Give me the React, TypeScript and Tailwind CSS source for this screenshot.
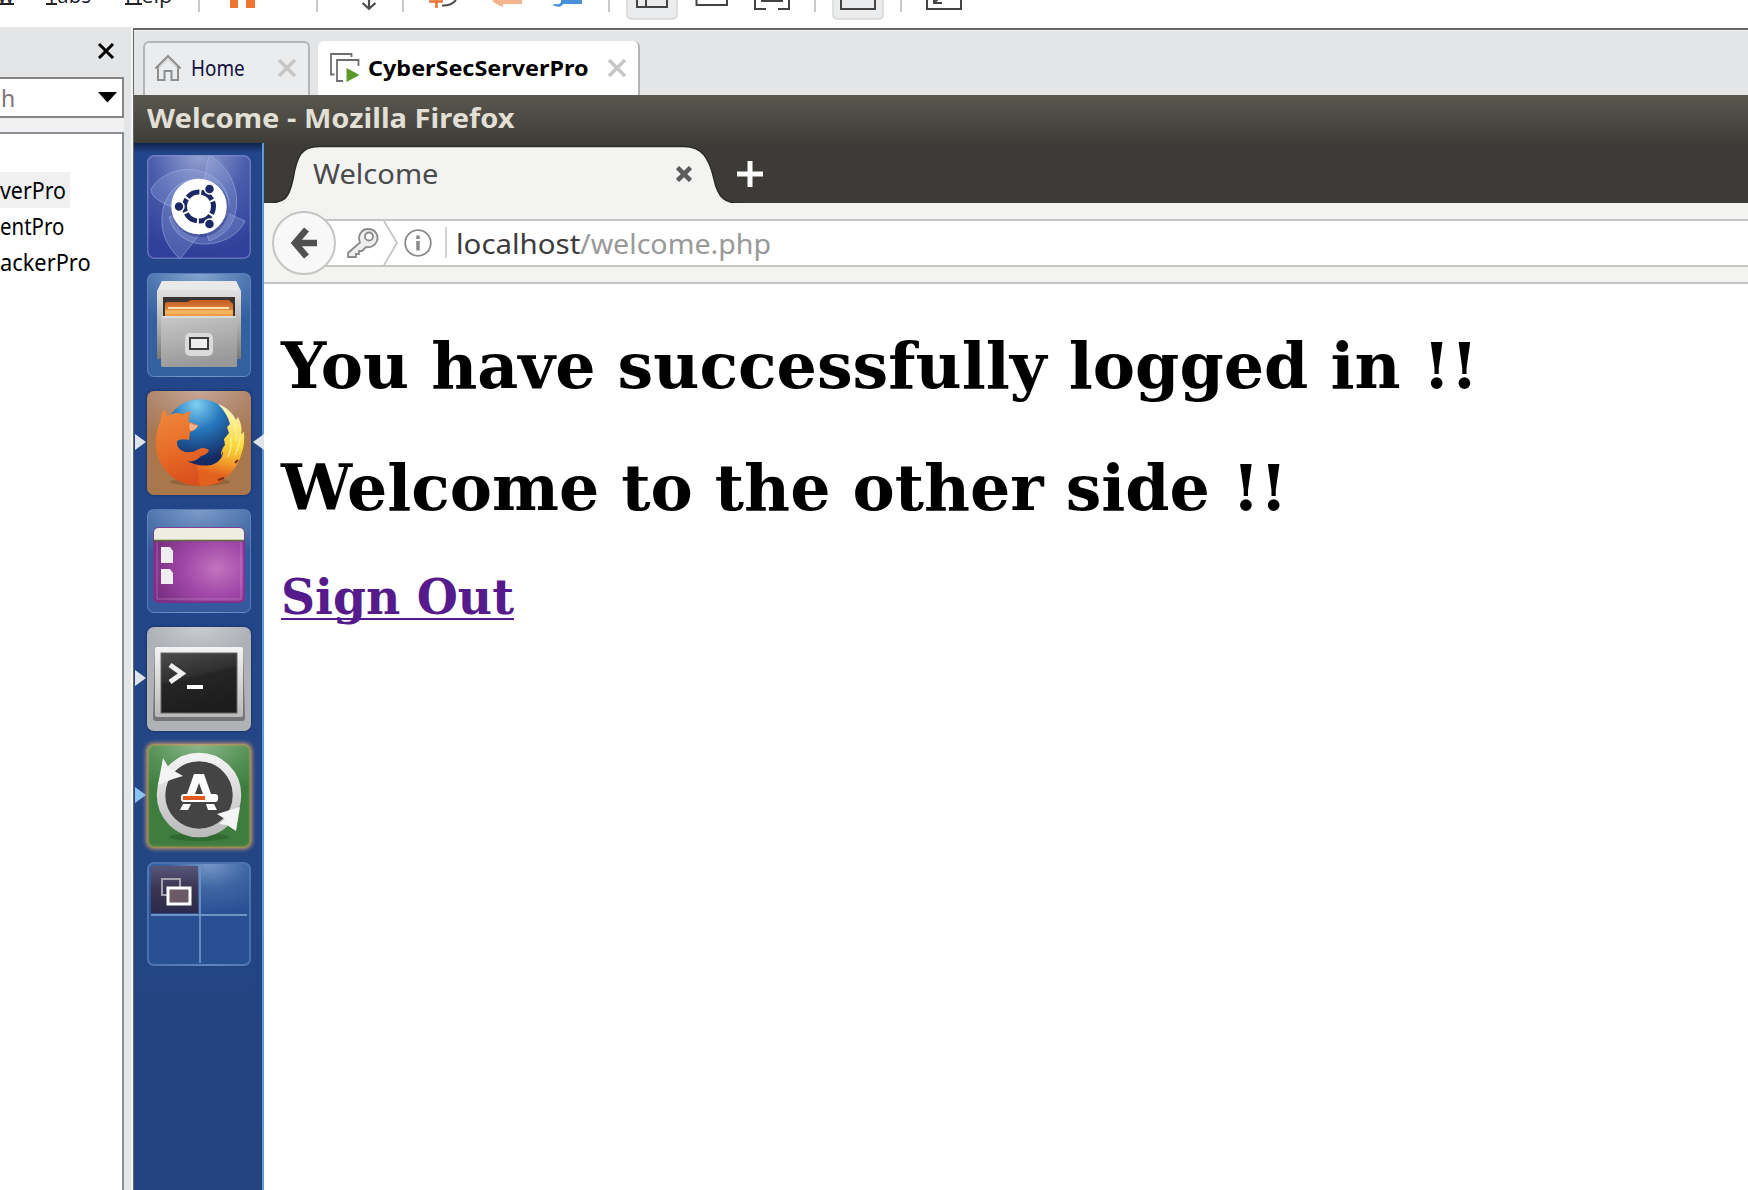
import { useLayoutEffect, useRef, useState, type ReactNode } from "react";

/* Text stretched horizontally to an exact width, whichever font is in use. */
function Fit({ width, className = "", children }: { width: number; className?: string; children: ReactNode }) {
  const ref = useRef<HTMLSpanElement>(null);
  const [scale, setScale] = useState(1);
  useLayoutEffect(() => {
    if (ref.current && ref.current.offsetWidth) setScale(width / ref.current.offsetWidth);
  }, [width]);
  return (
    <span
      ref={ref}
      className={"inline-block origin-left whitespace-nowrap " + className}
      style={{ transform: `scaleX(${scale})` }}
    >
      {children}
    </span>
  );
}

const Sep = ({ className }: { className: string }) => (
  <div className={"h-[12px] w-[2px] shrink-0 bg-[#c9c9c9] " + className} />
);

function Toolbar() {
  return (
    <div className="flex h-[27px] items-start overflow-hidden bg-white font-['Open_Sans',sans-serif] text-[21px] text-[#20202c]">
      <div className="relative h-[12px] w-[14px]">
        <span className="absolute right-0 bottom-[5px] leading-[24px]">w</span>
        <div className="absolute top-[3px] left-0 h-[2px] w-[14px] bg-[#222]" />
      </div>
      <div className="relative ml-[32px] h-[12px] w-[45px]">
        <span className="absolute bottom-[5px] left-0 leading-[24px]"><Fit width={45}>Tabs</Fit></span>
        <div className="absolute top-[3px] left-0 h-[2px] w-[11px] bg-[#222]" />
      </div>
      <div className="relative ml-[34px] h-[12px] w-[47px]">
        <span className="absolute bottom-[5px] left-0 leading-[24px]"><Fit width={47}>Help</Fit></span>
        <div className="absolute top-[3px] left-0 h-[2px] w-[17px] bg-[#222]" />
      </div>
      <Sep className="ml-[26px]" />
      <div className="ml-[30px] h-[8px] w-[8px] bg-[#ee7532]" />
      <div className="ml-[8px] h-[8px] w-[9px] bg-[#ee7532]" />
      <Sep className="ml-[61px]" />
      <svg className="ml-[43px]" width="16" height="12" fill="none" stroke="#4c4c4c" strokeWidth="2.2">
        <path d="M8 0V8M1.500 3 8 8.800 14.500 3" />
      </svg>
      <Sep className="ml-[25px]" />
      <svg className="ml-[25px]" width="32" height="12" fill="none">
        <path d="M0 1.500H14M7.500 0V8" stroke="#ee7532" strokeWidth="2.600" />
        <path d="M13 5.500Q22 6 27 0" stroke="#4c4c4c" strokeWidth="2" />
      </svg>
      <svg className="ml-[31px]" width="32" height="12">
        <path d="M0 1 2 0H30V4H11V7Q5 5 0 1Z" fill="#f6b48e" />
      </svg>
      <svg className="ml-[28px]" width="32" height="12">
        <path d="M3 4Q10 5 9 0H30V4H11Q9 9 0 5Z" fill="#4a90d9" />
      </svg>
      <Sep className="ml-[24px]" />
      <svg className="ml-[16px]" width="52" height="22" fill="none">
        <path d="M1 -5V14Q1 19 6 19H46Q51 19 51 14V-5" fill="#ebeced" stroke="#d6d7d8" strokeWidth="1.500" />
        <path d="M11 -5V7H41V-5M20 -5V7" stroke="#444" strokeWidth="2" />
      </svg>
      <svg className="ml-[17px]" width="34" height="12" fill="none" stroke="#444" strokeWidth="2">
        <path d="M1.500 -4V5H32V-4" />
      </svg>
      <svg className="ml-[24px]" width="38" height="12" fill="none" stroke="#444" strokeWidth="2">
        <path d="M2 -4V9H13M25 9H36V-4" />
        <path d="M9 -4V1H29V-4" fill="#bbb" />
      </svg>
      <Sep className="ml-[23px]" />
      <svg className="ml-[16px]" width="52" height="22" fill="none">
        <path d="M1 -5V14Q1 19 6 19H46Q51 19 51 14V-5" fill="#ebeced" stroke="#d6d7d8" strokeWidth="1.500" />
        <path d="M9 -5V9H43V-5" stroke="#444" strokeWidth="2" />
      </svg>
      <Sep className="ml-[16px]" />
      <svg className="ml-[23px]" width="38" height="12" fill="none" stroke="#444" strokeWidth="2">
        <path d="M2 -4V9H36V-4" />
        <path d="M9 -4V3H17M9 3 14 -2" />
      </svg>
    </div>
  );
}

const machines = [
  { name: "verPro", width: 66, selected: true },
  { name: "entPro", width: 64, selected: false },
  { name: "ackerPro", width: 91, selected: false },
];

function Library() {
  return (
    <aside className="flex w-[133px] shrink-0 flex-col border-r-2 border-[#f4f5f5] bg-[#e4e5e7] font-['Noto_Sans',sans-serif]">
      <div className="flex h-[50px] items-center justify-end pr-[16px]">
        <svg width="18" height="16" className="mt-[-2px]" fill="none" stroke="#000" strokeWidth="3">
          <path d="M2 1 16 15M16 1 2 15" />
        </svg>
      </div>
      <div className="w-[124px] bg-[#f0f0f0] pb-[14px]">
        <div className="flex h-[41px] w-[124px] items-center justify-between border-2 border-l-0 border-[#858585] bg-white pr-[5px] pl-[1px] text-[23px] text-[#7d7278]">
          <span className="leading-[30px]">h</span>
          <svg width="19" height="11"><path d="M0 0H19L9.500 10.500Z" fill="#000" /></svg>
        </div>
      </div>
      <div className="w-[124px] flex-1 border-t-2 border-r-2 border-[#8a8d93] bg-white pt-[38px] text-[23px] leading-[36px] text-black">
        {machines.map((m) => (
          <div key={m.name} className={m.selected ? "h-[36px] w-[70px] bg-[#f0f0f0]" : "h-[36px]"}>
            <Fit width={m.width}>{m.name}</Fit>
          </div>
        ))}
      </div>
    </aside>
  );
}

const GrayX = ({ className }: { className: string }) => (
  <svg width="20" height="20" className={className} fill="none" stroke="#c6c6c6" strokeWidth="3.600">
    <path d="M2 2 18 18M18 2 2 18" />
  </svg>
);

function VmTabs() {
  return (
    <div className="flex h-[65px] items-end border-t border-[#f6f6f6] bg-[#e4e5e7] pl-[9px] font-['Noto_Sans',sans-serif] text-[22px]">
      <div className="flex h-[54px] w-[167px] items-center rounded-t-[6px] border-2 border-b-0 border-[#b4b5b7] bg-[#ebecee] pb-[3px] pl-[9px]">
        <svg width="28" height="28" viewBox="0 0 28 28" fill="none" stroke="#8d8d8d" strokeWidth="2">
          <path d="M1.500 14.500 14 2 26.500 14.500M4 12.500V26H10.500V17H17.500V26H24V12.500" />
          <path d="M4 15 14 5 24 15" stroke="#c9c9c9" strokeWidth="1" />
        </svg>
        <span className="ml-[9px] w-[54px] text-[#10103c]"><Fit width={54}>Home</Fit></span>
        <GrayX className="ml-[32px]" />
      </div>
      <div className="ml-[8px] flex h-[54px] w-[322px] items-center rounded-t-[6px] border-r-2 border-[#b4b5b7] bg-white pb-[1px] pl-[12px]">
        <svg width="30" height="30" viewBox="0 0 30 30" fill="none" stroke="#6e6e6e" strokeWidth="1.800">
          <path d="M4.500 21.500H1V1H21.500V4" />
          <path d="M13 28H7V7H28.500V13" />
          <path d="M16.500 15 29.500 22 16.500 29Z" fill="#5a9a28" stroke="none" />
        </svg>
        <span className="ml-[8px] w-[220px] font-bold text-black"><Fit width={221}>CyberSecServerPro</Fit></span>
        <GrayX className="ml-[19px]" />
      </div>
    </div>
  );
}

function Tile({ children, className, left, right }: { children: ReactNode; className: string; left?: string; right?: boolean }) {
  return (
    <div className={"relative h-[104px] w-[104px] shrink-0 rounded-[7px] " + className}>
      {children}
      {left && (
        <svg className="absolute top-[43px] left-[-12px]" width="11" height="16"><path d="M0 0 11 8 0 16Z" fill={left} /></svg>
      )}
      {right && (
        <svg className="absolute top-[43px] right-[-13px]" width="11" height="16"><path d="M11 0 0 8 11 16Z" fill="#dfe3ea" /></svg>
      )}
    </div>
  );
}

function UbuntuLogo() {
  return (
    <svg width="104" height="104" viewBox="0 0 104 104">
      <defs>
        <radialGradient id="ub" cx="50%" cy="0%" r="95%">
          <stop offset="0" stopColor="#93a1d0" />
          <stop offset="0.500" stopColor="#4a5bab" />
          <stop offset="1" stopColor="#30409a" />
        </radialGradient>
        <clipPath id="ubclip"><rect width="104" height="104" rx="7" /></clipPath>
      </defs>
      <g clipPath="url(#ubclip)">
        <rect width="104" height="104" fill="url(#ub)" />
        <g fill="#a9b8e6" stroke="#b4c2ea" strokeOpacity="0.450" fillOpacity="0.250">
          <path d="M4 34C18 10 60 6 78 34C84 46 82 56 79 62L52 80L24 52C12 46 4 42 4 34Z" />
          <path d="M62 0C84 12 94 38 88 60C84 74 74 82 62 86L52 50Z" />
          <path d="M15 62C16 38 34 22 54 24L52 80L33 104C20 92 14 78 15 62Z" />
          <path d="M98 66C90 84 66 92 48 88C34 84 26 76 22 62L52 50L80 58Z" />
        </g>
      </g>
      <circle cx="53" cy="53" r="29" fill="#1c2a78" opacity="0.400" />
      <circle cx="52" cy="51.500" r="27.800" fill="#fff" />
      <circle cx="52" cy="51.500" r="14.500" fill="none" stroke="#1b2865" strokeWidth="5" strokeDasharray="13.200 1.980" strokeDashoffset="5.600" />
      <g fill="#1b2865" stroke="#fff" strokeWidth="1.500">
        <circle cx="32" cy="51.500" r="5" />
        <circle cx="62.500" cy="34" r="5" />
        <circle cx="62.500" cy="69" r="5" />
      </g>
      <rect x="0.750" y="0.750" width="102.500" height="102.500" rx="7" fill="none" stroke="#7e93d0" strokeOpacity="0.600" strokeWidth="1.500" />
    </svg>
  );
}

function FilesIcon() {
  return (
    <svg width="104" height="104" viewBox="0 0 104 104">
      <defs>
        <linearGradient id="fback" x2="0" y2="1"><stop offset="0" stopColor="#ededed" /><stop offset="0.400" stopColor="#c4c4c4" /><stop offset="1" stopColor="#777" /></linearGradient>
        <linearGradient id="ffront" x2="0.300" y2="1"><stop offset="0" stopColor="#c9c9c9" /><stop offset="1" stopColor="#999" /></linearGradient>
        <linearGradient id="fpaper" x2="0" y2="1"><stop offset="0" stopColor="#c55a20" /><stop offset="1" stopColor="#f3a650" /></linearGradient>
      </defs>
      <path d="M15 8H89L94 18V86H10V18Z" fill="url(#fback)" />
      <path d="M15 8H89L93 17H11Z" fill="#e9e9e9" />
      <rect x="16" y="24" width="72" height="20" fill="#373431" />
      <path d="M20 29H40L44 27H82L86 31V44H18V30Z" fill="url(#fpaper)" />
      <path d="M21 35H82" stroke="#ffe0b0" strokeWidth="2" />
      <path d="M18 39H86" stroke="#f2b35c" strokeWidth="4" />
      <rect x="14" y="43" width="76" height="51" rx="1.500" fill="url(#ffront)" />
      <path d="M15 44H89" stroke="#e2e2e2" strokeWidth="1.500" />
      <rect x="38" y="60" width="28" height="23" rx="5" fill="#dadada" />
      <rect x="43" y="65" width="18" height="11" fill="#eee" stroke="#3c3c3c" strokeWidth="2" />
    </svg>
  );
}

function FirefoxIcon() {
  return (
    <svg width="104" height="104" viewBox="0 0 104 104">
      <defs>
        <radialGradient id="globe" cx="45%" cy="8%" r="80%"><stop offset="0" stopColor="#7fd0f2" /><stop offset="0.450" stopColor="#2678bd" /><stop offset="1" stopColor="#152a63" /></radialGradient>
        <linearGradient id="fox" x1="0" y1="0" x2="0.300" y2="1"><stop offset="0" stopColor="#ee8a3c" /><stop offset="0.500" stopColor="#ea7029" /><stop offset="1" stopColor="#d9501d" /></linearGradient>
        <linearGradient id="tail" gradientUnits="userSpaceOnUse" x1="80" y1="14" x2="62" y2="95"><stop offset="0" stopColor="#fff9c4" /><stop offset="0.450" stopColor="#fbd93c" /><stop offset="0.660" stopColor="#f5a52c" /><stop offset="0.850" stopColor="#e3611f" /></linearGradient>
      </defs>
      <ellipse cx="53" cy="91" rx="30" ry="4" fill="#5a3a1c" opacity="0.300" />
      <circle cx="53" cy="43" r="35" fill="url(#globe)" />
      <path d="M18 18Q17 22 21 25Q28 20 36 23Q39 21 44 20Q41 25 42 31Q48 33 51 34Q50 39 43 41L42 49Q34 47 30 50Q29 58 38 61Q46 62 50 59Q56 55 62 59Q61 63 54 65Q48 72 40 70Q52 76 66 74L76 90C69 94 61 95 53 95C28 95 9 77 9 53Q9 38 14 29Q13 22 18 18Z" fill="url(#fox)" />
      <path d="M71 13C79 16 85 21 89 29L91 26Q96 36 94 43L97 41Q98 52 95 61C90 81 74 95 53 95L50 75C66 77 76 70 76 60L74 65Q74 58 78 54L77 48L82 42L80 36L83 33Q80 22 71 13Z" fill="url(#tail)" />
      <path d="M85 28Q91 38 89 50M93 44Q93 54 88 64M84 46Q85 56 81 66" fill="none" stroke="#fff3a0" strokeWidth="1.600" opacity="0.700" />
      <path d="M43 32Q49 35 51 34Q50 38 44 40Q41 37 43 32Z" fill="#f6b090" />
      <path d="M88 72 91 69M71 89 77 87" fill="none" stroke="#7a2d12" strokeWidth="2" />
    </svg>
  );
}

function DesktopIcon() {
  return (
    <svg width="104" height="104" viewBox="0 0 104 104">
      <defs>
        <radialGradient id="desk" cx="70%" cy="55%" r="75%"><stop offset="0" stopColor="#c274bd" /><stop offset="0.500" stopColor="#a047a8" /><stop offset="1" stopColor="#782f80" /></radialGradient>
      </defs>
      <rect x="8" y="21" width="89" height="73" rx="5" fill="#1b2e62" opacity="0.400" />
      <path d="M7 26Q7 19 12 19H92Q97 19 97 26V88Q97 93 92 93H12Q7 93 7 88Z" fill="url(#desk)" stroke="#8e2b8c" strokeWidth="1.500" />
      <path d="M7 31V24Q7 19 12 19H92Q97 19 97 24V31Z" fill="#efede0" />
      <path d="M7 31.500H97" stroke="#5d6b35" strokeWidth="1.500" />
      <path d="M10 33V90H94V33" fill="none" stroke="#d79bd6" strokeOpacity="0.450" />
      <path d="M14 38H23L26 42V54H14ZM14 60H23L26 64V75H14Z" fill="#f0edf0" />
    </svg>
  );
}

function TerminalIcon() {
  return (
    <svg width="104" height="104" viewBox="0 0 104 104">
      <defs>
        <linearGradient id="term" x2="0.300" y2="1"><stop offset="0" stopColor="#4b4b4b" /><stop offset="0.450" stopColor="#303030" /><stop offset="0.500" stopColor="#252525" /><stop offset="1" stopColor="#1d1d1d" /></linearGradient>
        <linearGradient id="bezel" x2="0" y2="1"><stop offset="0" stopColor="#f4f4f4" /><stop offset="1" stopColor="#b9b9b9" /></linearGradient>
      </defs>
      <path d="M8 21H96L98 91Q98 94 95 94H9Q6 94 6 91Z" fill="#747679" />
      <rect x="8" y="20" width="88" height="70" rx="2" fill="url(#bezel)" />
      <rect x="14" y="26" width="76" height="60" fill="url(#term)" stroke="#666" />
      <path d="M23 38 35 46.500 23 55" fill="none" stroke="#f1f1f1" strokeWidth="5" />
      <path d="M40 60H56" stroke="#fff" strokeWidth="4" />
    </svg>
  );
}

function UpdaterIcon() {
  return (
    <svg width="104" height="104" viewBox="0 0 104 104">
      <defs>
        <linearGradient id="ring" x2="0" y2="1"><stop offset="0" stopColor="#f2f2f2" /><stop offset="1" stopColor="#bcbcbc" /></linearGradient>
      </defs>
      <ellipse cx="52" cy="93" rx="30" ry="4" fill="#1d4a20" opacity="0.400" />
      <circle cx="52" cy="51" r="34" fill="#444" />
      <circle cx="52" cy="51" r="38" fill="none" stroke="url(#ring)" strokeWidth="8.500" />
      <path d="M16 14 22 24 36 32 26 35 11 41Z" fill="#f4f4f4" />
      <path d="M93 63 70 70 78 75 72 80 80 81 89 87Z" fill="#f4f4f4" />
      <path d="M33 66 36 60H44L41 66ZM61 66 59 60H67L70 66Z" fill="#fff" />
      <path d="M40 50 47 30H57L64 50H56L52 39 48 50Z" fill="#fff" />
      <rect x="34" y="50" width="37" height="8" rx="3" fill="#fff" />
      <rect x="36" y="52" width="22" height="4" fill="#e25a22" />
    </svg>
  );
}

function WorkspaceIcon() {
  return (
    <svg width="104" height="104" viewBox="0 0 104 104">
      <defs>
        <linearGradient id="ws" x2="0" y2="1"><stop offset="0" stopColor="#57567a" /><stop offset="0.500" stopColor="#3a3350" /><stop offset="1" stopColor="#2c2a4c" /></linearGradient>
      </defs>
      <path d="M4 4H51V51H4Z" fill="url(#ws)" />
      <path d="M53 4V101M4 53H100" stroke="#6f93c4" strokeWidth="1.800" />
      <rect x="15" y="17" width="18" height="16" fill="none" stroke="#a5a2ae" strokeWidth="2" />
      <rect x="21" y="26" width="22" height="16" fill="#6b5a66" stroke="#fff" strokeWidth="3" />
    </svg>
  );
}

function Launcher() {
  return (
    <nav className="flex w-[130px] shrink-0 flex-col gap-[13.900px] border-r-2 border-[#5b9bd8] bg-[linear-gradient(180deg,#10234f_0px,#23458a_10px,#234688_500px,#24447f_100%)] pt-[12px] pl-[12.500px]">
      <Tile className=""><UbuntuLogo /></Tile>
      <Tile className="border border-[#6e93c6]/60 bg-[radial-gradient(90px_50px_at_50%_0%,#84a5cf_0%,#4a72ae_60%,#3560a0_100%)] [&>svg]:m-[-1px]"><FilesIcon /></Tile>
      <Tile className="bg-[radial-gradient(90px_50px_at_50%_0%,#c5a695_0%,#ae8468_60%,#a8784c_100%)] shadow-[0_0_3px_#14284f]" left="#dfe3ea" right><FirefoxIcon /></Tile>
      <Tile className="border border-[#6e93c6]/60 bg-[radial-gradient(90px_50px_at_50%_0%,#7c9bc9_0%,#4d72ab_60%,#34599c_100%)] [&>svg]:m-[-1px]"><DesktopIcon /></Tile>
      <Tile className="bg-[radial-gradient(90px_50px_at_50%_0%,#c9ccd1_0%,#adb0b6_60%,#b0b2b6_100%)] shadow-[0_0_3px_#14284f]" left="#dfe3ea"><TerminalIcon /></Tile>
      <Tile className="bg-[radial-gradient(90px_50px_at_50%_0%,#8cb88c_0%,#528f53_60%,#3f7d3f_100%)] shadow-[0_0_4px_1px_#d0986a,inset_0_0_3px_1px_#c9975f]" left="#8cc4f0"><UpdaterIcon /></Tile>
      <Tile className="border-2 border-[#5a80b5]/70 bg-[radial-gradient(80px_50px_at_60%_0%,#7696c6_0%,#3d65a3_50%,#2a5094_100%)] [&>svg]:m-[-2px]"><WorkspaceIcon /></Tile>
    </nav>
  );
}

function Browser() {
  return (
    <div className="flex min-w-0 flex-1 flex-col bg-white">
      <div className="flex h-[60px] shrink-0 bg-[#3c3b37] font-['Noto_Sans',sans-serif]">
        <div className="relative h-[60px] w-[476px]">
          <svg className="absolute top-0 left-0" width="480" height="60">
            <path d="M-2 62V60.500C22 60.500 25 55 29 36C33 13 37 3.500 55 3.500H420C438 3.500 445 15 450 36C454 55 461 60.500 478 60.500V62Z" fill="#f3f3f2" stroke="#2b2a27" strokeWidth="1.500" />
          </svg>
          <div className="relative flex h-[60px] items-center pt-[2px] pl-[48.500px] text-[27px] text-[#4a4a4a]">
            <span className="w-[126px]"><Fit width={126}>Welcome</Fit></span>
            <svg className="mt-[-1px] ml-[237.500px]" width="16" height="16" fill="none" stroke="#5c5c5c" strokeWidth="4.500">
              <path d="M1.500 1.500 14.500 14.500M14.500 1.500 1.500 14.500" />
            </svg>
          </div>
        </div>
        <svg className="mt-[18px] ml-[-3px]" width="26" height="26" stroke="#fff" strokeWidth="5">
          <path d="M13 0V26M0 13H26" />
        </svg>
      </div>
      <div className="relative flex h-[81px] shrink-0 items-center border-b-2 border-[#c4c3c1] bg-[#f3f3f2] pl-[8px] font-['Noto_Sans',sans-serif] text-[28px]">
        <div className="z-10 flex h-[64px] w-[64px] items-center justify-center rounded-full border-2 border-[#c6c5c3] bg-[#f8f8f8]">
          <svg width="28" height="32" viewBox="0 0 28 32" fill="none" stroke="#505050" strokeWidth="6.500">
            <path d="M16.500 2.500 5 16 16.500 29.500M6 16H27" />
          </svg>
        </div>
        <div className="ml-[-12px] flex h-[48px] flex-1 items-center border-y-2 border-[#c6c5c3] bg-white">
          <svg className="ml-[21px]" width="35" height="32" viewBox="0 0 35 32" fill="#eee" stroke="#8a8a8a" strokeWidth="1.800">
            <path d="M15 15.500C12 8 17 2 23 2C30 2 34 8 32 14C30 19 25 21 21 20L17 24H14V27H11V30H3V26Z" />
            <circle cx="24" cy="9.500" r="4" fill="#fff" />
          </svg>
          <svg width="17" height="44" className="ml-[3px]" fill="none" stroke="#c6c5c3" strokeWidth="1.800">
            <path d="M1 0 14 22 1 44" />
          </svg>
          <svg width="28" height="28" className="ml-[4px]" fill="none" stroke="#8a8a8a" strokeWidth="1.800">
            <circle cx="14" cy="14" r="12.800" />
            <path d="M14 12V21.500M14 6.500V10" strokeWidth="3.500" />
          </svg>
          <div className="ml-[13px] h-[31px] w-[2px] bg-[#d2d2d2]" />
          <div className="mt-[1px] ml-[9px] flex text-[#3c3c3c]">
            <span className="w-[124px]"><Fit width={124}>localhost</Fit></span>
            <span className="text-[#999]"><Fit width={191}>/welcome.php</Fit></span>
          </div>
        </div>
      </div>
      <main className="pt-[44px] pl-[17px] font-['DejaVu_Serif',serif] font-bold text-black">
        <h1 className="h-[76px] text-[63.500px] leading-[76px]"><Fit width={1197}>You have successfully logged in !!</Fit></h1>
        <h1 className="mt-[46px] h-[76px] text-[63.500px] leading-[76px]"><Fit width={1007}>Welcome to the other side !!</Fit></h1>
        <h2 className="mt-[42px] h-[58px] text-[48px] leading-[58px] text-[#551a8b]">
          <Fit width={233} className="underline decoration-2 underline-offset-[4px] [text-decoration-skip-ink:none]">Sign Out</Fit>
        </h2>
      </main>
    </div>
  );
}

export default function App() {
  return (
    <div className="flex h-[1190px] w-[1748px] flex-col overflow-hidden bg-white">
      <Toolbar />
      <div className="flex min-h-0 flex-1">
        <Library />
        <div className="mt-px flex min-w-0 flex-1 flex-col border-t-2 border-l border-[#666]">
          <VmTabs />
          <div className="flex h-[48px] shrink-0 items-center bg-[linear-gradient(180deg,#5a584f,#3d3c37)] pb-[1px] pl-[13px] font-['Noto_Sans',sans-serif] text-[26px] font-bold text-[#e2dfd6]">
            <Fit width={368}>Welcome - Mozilla Firefox</Fit>
          </div>
          <div className="flex min-h-0 flex-1">
            <Launcher />
            <Browser />
          </div>
        </div>
      </div>
    </div>
  );
}
